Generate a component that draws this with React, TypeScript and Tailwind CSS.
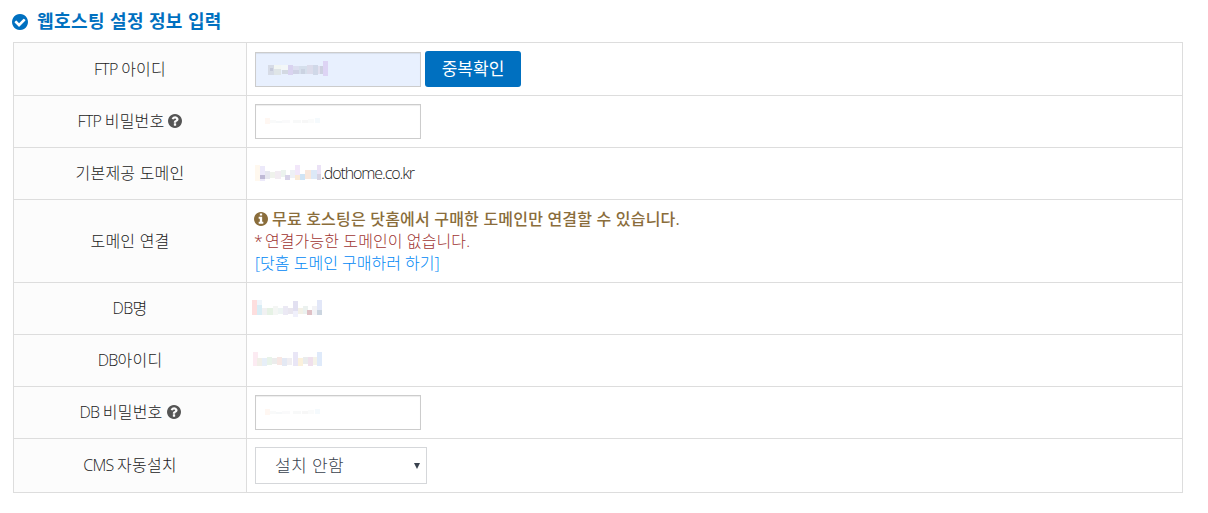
import React from "react";

const CIRCLE =
  "M1664 896q0 209-103 385.500t-279.500 279.500-385.500 103-385.500-103-279.500-279.500-103-385.500 103-385.500 279.500-279.500 385.500-103 385.500 103 279.500 279.500 103 385.500z";

const GLYPHS = {
  check:
    "M1412 734q0-28-18-46l-91-90q-19-19-45-19t-45 19l-408 407-226-226q-19-19-45-19t-45 19l-91 90q-18 18-18 46 0 27 18 45l362 362q19 19 45 19 27 0 46-19l543-543q18-18 18-45z",
  question:
    "M1024 1376v-192q0-14-9-23t-23-9h-192q-14 0-23 9t-9 23v192q0 14 9 23t23 9h192q14 0 23-9t9-23zm256-672q0-88-55.500-163t-138.500-116-170-41q-243 0-371 213-15 24 8 42l132 100q7 6 19 6 16 0 25-12 53-68 86-92 34-24 86-24 48 0 85.500 26t37.500 59q0 38-20 61t-68 45q-63 28-115.500 86.500t-52.500 125.500v36q0 14 9 23t23 9h192q14 0 23-9t9-23q0-19 21.500-49.500t54.500-49.500q32-18 49-28.500t46-35 44.500-48 28-60.500 12.500-81z",
  info: "M1152 1376v-160q0-14-9-23t-23-9h-96v-512q0-14-9-23t-23-9h-320q-14 0-23 9t-9 23v160q0 14 9 23t23 9h96v320h-96q-14 0-23 9t-9 23v160q0 14 9 23t23 9h448q14 0 23-9t9-23zm-128-896v-160q0-14-9-23t-23-9h-192q-14 0-23 9t-9 23v160q0 14 9 23t23 9h192q14 0 23-9t9-23z",
};

// x, y, width, height, colour of each block in a masked value
type Cell = [number, number, number, number, string];

const FTP_ID: Cell[] = [
  [0, 4, 6, 10, "#d6dbe6"],
  [2, 7, 3, 3, "#c6cada"],
  [6, 4, 7, 4, "#f2f6f3"],
  [6, 8, 7, 6, "#dfe5e7"],
  [13, 4, 7, 5, "#f3f7f8"],
  [14, 9, 6, 4, "#d3d9e2"],
  [20, 4, 5, 10, "#d9d3f0"],
  [25, 5, 6, 8, "#dcdff0"],
  [25, 9, 6, 4, "#cfd2e5"],
  [31, 5, 8, 8, "#d5dfec"],
  [33, 8, 4, 5, "#cbd3e2"],
  [39, 4, 6, 9, "#dcdceb"],
  [45, 4, 5, 10, "#d0d8e8"],
  [50, 5, 5, 8, "#e2e0ef"],
  [55, 0, 5, 15, "#ddd4f4"],
  [52, 5, 3, 8, "#cdd1e0"],
];

const DOMAIN: Cell[] = [
  [0, 0, 5, 16, "#fff8ee"],
  [5, 1, 5, 15, "#ece9fa"],
  [5, 10, 5, 4, "#bfbad6"],
  [10, 6, 5, 8, "#e6e7ef"],
  [15, 7, 5, 6, "#eff2ec"],
  [20, 6, 6, 8, "#f2ecf2"],
  [26, 5, 5, 7, "#ecf3ee"],
  [30, 10, 5, 5, "#d8d3e8"],
  [35, 5, 5, 8, "#eef0f5"],
  [40, 0, 5, 10, "#f2e7fa"],
  [40, 10, 5, 5, "#faead7"],
  [45, 9, 5, 6, "#cfe4f5"],
  [50, 5, 6, 9, "#f8e7dc"],
  [56, 5, 6, 9, "#dce8f7"],
  [62, 0, 4, 15, "#ebe2f6"],
  [62, 9, 4, 6, "#d7d4e4"],
];

const DB_NAME: Cell[] = [
  [0, 0, 5, 15, "#fddede"],
  [5, 0, 5, 5, "#eff5fb"],
  [5, 5, 5, 10, "#d9edf5"],
  [10, 8, 5, 7, "#f1f1f2"],
  [15, 8, 6, 7, "#e6f2e5"],
  [21, 6, 5, 9, "#f4f6f4"],
  [26, 8, 5, 6, "#edf4f3"],
  [31, 6, 5, 9, "#ebe9f4"],
  [36, 8, 5, 6, "#e9e6ef"],
  [41, 1, 5, 10, "#e2e0f1"],
  [41, 11, 5, 6, "#f0f0fb"],
  [46, 8, 5, 6, "#f3f1e7"],
  [51, 6, 5, 8, "#ebf1ef"],
  [55, 10, 5, 5, "#dfc0c5"],
  [60, 6, 5, 9, "#f3f3f6"],
  [65, 0, 5, 10, "#e2e7f8"],
  [65, 10, 5, 5, "#cbd5e0"],
];

const DB_ID: Cell[] = [
  [1, 0, 5, 14, "#fcebf2"],
  [5, 6, 5, 8, "#f1efe8"],
  [10, 6, 5, 8, "#e7eff8"],
  [15, 5, 5, 8, "#e8f3e9"],
  [20, 6, 5, 6, "#ececec"],
  [25, 5, 5, 8, "#f7e7e4"],
  [30, 6, 5, 8, "#e4e9f4"],
  [35, 6, 5, 7, "#f0eef2"],
  [41, 0, 5, 14, "#e9e6f6"],
  [46, 6, 5, 8, "#fbf1dc"],
  [51, 5, 5, 7, "#eaeced"],
  [56, 5, 5, 9, "#f0e0ec"],
  [61, 5, 5, 8, "#f5f3e9"],
  [65, 0, 5, 14, "#dfeafa"],
];

const PASSWORD: Cell[] = [
  [0, 1, 5, 6, "#fff7f2"],
  [5, 3, 6, 3, "#f9fafa"],
  [11, 4, 6, 2, "#f6f8f9"],
  [17, 3, 8, 3, "#fafafb"],
  [28, 3, 8, 3, "#f8f9f9"],
  [37, 3, 6, 3, "#f7f7f7"],
  [43, 2, 6, 4, "#fafbfb"],
  [50, 1, 5, 5, "#f5fafd"],
];

function Mosaic({ cells, className }: { cells: Cell[]; className: string }) {
  return (
    <svg
      viewBox="0 0 72 18"
      shapeRendering="crispEdges"
      className={`h-[18px] w-[72px] ${className}`}
    >
      {cells.map(([x, y, width, height, fill], i) => (
        <rect key={i} x={x} y={y} width={width} height={height} fill={fill} />
      ))}
    </svg>
  );
}

function CircleIcon({
  name,
  className,
}: {
  name: keyof typeof GLYPHS;
  className: string;
}) {
  return (
    <svg viewBox="128 128 1536 1536" fill="currentColor" className={className}>
      <path fillRule="evenodd" d={CIRCLE + GLYPHS[name]} />
    </svg>
  );
}

function Field({
  cells,
  className,
  cellsClassName,
}: {
  cells: Cell[];
  className: string;
  cellsClassName: string;
}) {
  return (
    <div
      className={`h-[35px] w-[166px] border border-[#cccccc] shadow-[inset_0_1px_1px_rgba(0,0,0,0.075)] ${className}`}
    >
      <Mosaic cells={cells} className={cellsClassName} />
    </div>
  );
}

function Row({
  prefix,
  label,
  help,
  height,
  children,
}: {
  prefix?: string;
  label: string;
  help?: boolean;
  height: string;
  children?: React.ReactNode;
}) {
  return (
    <div className={`flex border-b border-[#dddddd] ${height}`}>
      <div className="flex w-[233px] shrink-0 items-center justify-center gap-1 border-r border-[#dddddd] bg-[#fcfcfc] pb-px text-[#222222]">
        <span className="whitespace-pre tracking-[0.2px]">
          {prefix && <span className="tracking-[-0.7px]">{prefix}</span>}
          {label}
        </span>
        {help && (
          <CircleIcon name="question" className="size-3.5 text-[#555555]" />
        )}
      </div>
      <div className="flex flex-1 items-center pl-2">{children}</div>
    </div>
  );
}

function App() {
  return (
    <div className="w-[1208px] h-[513px] bg-white pl-[13px] font-['Open_Sans','Noto_Sans_CJK_KR',sans-serif] text-base font-light">
      <h2 className="flex h-[42px] items-center gap-[9px] text-lg font-bold text-[#0070c0]">
        <CircleIcon name="check" className="mt-0.5 -ml-px size-4" />
        <span className="tracking-[0.4px]">웹호스팅 설정 정보 입력</span>
      </h2>
      <div className="w-[1170px] border-t border-l border-r border-[#dddddd]">
        <Row prefix="FTP " label="아이디" height="h-[53px]">
          <Field
            cells={FTP_ID}
            className="bg-[#e8f0fe]"
            cellsClassName="mt-2 ml-[12px]"
          />
          <button className="ml-1 h-9 w-24 rounded-[3px] bg-[#0070c0] text-[17px] font-normal text-white">
            중복확인
          </button>
        </Row>
        <Row prefix="FTP " label="비밀번호" help height="h-[52px]">
          <Field
            cells={PASSWORD}
            className="bg-white"
            cellsClassName="mt-3 ml-[9px]"
          />
        </Row>
        <Row label="기본제공 도메인" height="h-[52px]">
          <Mosaic cells={DOMAIN} className="shrink-0" />
          <span className="-ml-1.5 pb-0.5 tracking-[-1.1px] text-[#222222]">
            .dothome.co.kr
          </span>
        </Row>
        <Row label="도메인 연결" height="h-[83px]">
          <div className="leading-[22px]">
            <p className="-ml-px flex items-center gap-1 font-medium tracking-[0.2px] text-[#8a6d3b]">
              <CircleIcon name="info" className="size-3.5" />
              무료 호스팅은 닷홈에서 구매한 도메인만 연결할 수 있습니다.
            </p>
            <p className="text-[#a03532]">
              <span className="-ml-px tracking-[-1px]">* </span>
              <span className="tracking-[0.1px]">
                연결가능한 도메인이 없습니다.
              </span>
            </p>
            <a className="block text-[#0088f5]">[닷홈 도메인 구매하러 하기]</a>
          </div>
        </Row>
        <Row prefix="DB" label="명" height="h-[52px]">
          <Mosaic cells={DB_NAME} className="-ml-[3px]" />
        </Row>
        <Row prefix="DB" label="아이디" height="h-[52px]">
          <Mosaic cells={DB_ID} className="-ml-[3px]" />
        </Row>
        <Row prefix="DB " label="비밀번호" help height="h-[52px]">
          <Field
            cells={PASSWORD}
            className="bg-white"
            cellsClassName="mt-3 ml-[9px]"
          />
        </Row>
        <Row prefix="CMS " label="자동설치" height="h-[54px]">
          <div className="flex h-[37px] w-[172px] items-center justify-between border border-[#d5d7da] pr-1.5 pl-[19px] text-[17px] text-[#39424e]">
            <span className="tracking-[0.4px]">설치 안함</span>
            <svg viewBox="0 0 6 6" className="size-1.5" fill="currentColor">
              <path d="M0 0h6L3 6z" />
            </svg>
          </div>
        </Row>
      </div>
    </div>
  );
}

export default App;
